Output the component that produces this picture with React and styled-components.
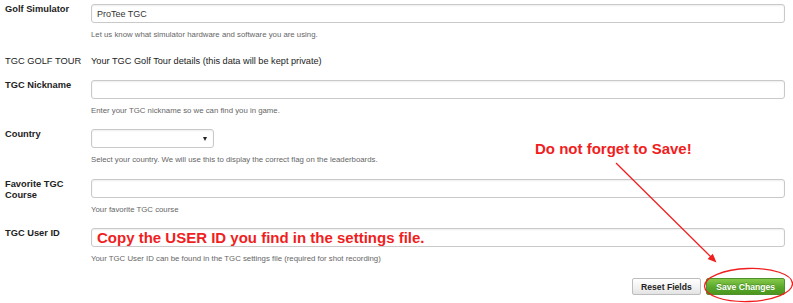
import React from "react";
import styled, { createGlobalStyle } from "styled-components";

const GlobalStyle = createGlobalStyle`
  html, body {
    margin: 0;
    padding: 0;
    background: #fff;
  }
  body {
    font-family: "Liberation Sans", Arial, sans-serif;
  }
`;

const Page = styled.div`
  position: relative;
  width: 793px;
  height: 303px;
  box-sizing: border-box;
  padding: 4px 8px 0 5px;
  overflow: hidden;
`;

const Row = styled.div`
  display: grid;
  grid-template-columns: 86px 1fr;
  margin-bottom: ${(p) => (p.$gap != null ? p.$gap : 12.5)}px;
`;

const Label = styled.div`
  font-size: 9.3px;
  line-height: 11px;
  font-weight: ${(p) => (p.$plain ? 400 : 700)};
  color: #222;
  padding-right: 8px;
  ${(p) => p.$plain && "line-height: 14px;"}
`;

const Plain = styled.div`
  font-size: 9.2px;
  line-height: 14px;
  color: #222;
`;

const Field = styled.div`
  display: flex;
  flex-direction: column;
`;

const TextBox = styled.input`
  box-sizing: border-box;
  width: 100%;
  height: 19px;
  margin: 0;
  padding: 0 5px;
  border: 1px solid #c9c9c9;
  border-radius: 3px;
  box-shadow: inset 0 1px 2px rgba(0, 0, 0, 0.07);
  background: #fff;
  font-family: "Liberation Sans", Arial, sans-serif;
  font-size: ${(p) => (p.$shout ? "15px" : "9px")};
  font-weight: ${(p) => (p.$shout ? 700 : 400)};
  color: ${(p) => (p.$shout ? "#f01e1e" : "#333")};
  outline: none;
`;

const SelectBox = styled.div`
  position: relative;
  box-sizing: border-box;
  width: 123px;
  height: 19px;
  border: 1px solid #c9c9c9;
  border-radius: 3px;
  box-shadow: inset 0 1px 2px rgba(0, 0, 0, 0.07);
  background: #fff;

  &::after {
    content: "";
    position: absolute;
    right: 6px;
    top: 7px;
    border-left: 2.5px solid transparent;
    border-right: 2.5px solid transparent;
    border-top: 4px solid #222;
  }
`;

const Help = styled.div`
  margin-top: 6px;
  font-size: 7.8px;
  line-height: 12px;
  color: #666;
  white-space: nowrap;
`;

const Actions = styled.div`
  display: flex;
  justify-content: flex-end;
  gap: 5px;
  margin-top: 1px;
`;

const Button = styled.button`
  box-sizing: border-box;
  height: 17px;
  padding: 0 ${(p) => (p.$primary ? 9 : 8.5)}px;
  border-radius: 2px;
  font-family: "Liberation Sans", Arial, sans-serif;
  font-size: 8.6px;
  font-weight: 700;
  white-space: nowrap;
  cursor: pointer;
  border: 1px solid ${(p) => (p.$primary ? "#4f922c" : "#bdbdbd")};
  color: ${(p) => (p.$primary ? "#fff" : "#222")};
  background: ${(p) =>
    p.$primary
      ? "linear-gradient(#86c94a, #5aa72c 55%, #4b971f)"
      : "linear-gradient(#ffffff, #f1f1f1 60%, #e2e2e2)"};
  text-shadow: ${(p) => (p.$primary ? "0 -1px 0 rgba(0,0,0,0.2)" : "none")};
`;

const Note = styled.div`
  position: absolute;
  left: 535px;
  top: 140px;
  font-size: 15px;
  line-height: 17px;
  font-weight: 700;
  color: #f01e1e;
  white-space: nowrap;
`;

const Marks = styled.svg`
  position: absolute;
  left: 0;
  top: 0;
  pointer-events: none;
`;

export default function App() {
  return (
    <Page>
      <GlobalStyle />
      <Row>
        <Label>Golf Simulator</Label>
        <Field>
          <TextBox defaultValue="ProTee TGC" />
          <Help>Let us know what simulator hardware and software you are using.</Help>
        </Field>
      </Row>

      <Row $gap={12}>
        <Label $plain>TGC GOLF TOUR</Label>
        <Plain>Your TGC Golf Tour details (this data will be kept private)</Plain>
      </Row>

      <Row>
        <Label>TGC Nickname</Label>
        <Field>
          <TextBox />
          <Help>Enter your TGC nickname so we can find you in game.</Help>
        </Field>
      </Row>

      <Row>
        <Label>Country</Label>
        <Field>
          <SelectBox />
          <Help>
            Select your country. We will use this to display the correct flag on
            the leaderboards.
          </Help>
        </Field>
      </Row>

      <Row>
        <Label>
          Favorite TGC
          <br />
          Course
        </Label>
        <Field>
          <TextBox />
          <Help>Your favorite TGC course</Help>
        </Field>
      </Row>

      <Row $gap={13}>
        <Label>TGC User ID</Label>
        <Field>
          <TextBox $shout defaultValue="Copy the USER ID you find in the settings file." />
          <Help>
            Your TGC User ID can be found in the TGC settings file (required for
            shot recording)
          </Help>
        </Field>
      </Row>

      <Actions>
        <Button>Reset Fields</Button>
        <Button $primary>Save Changes</Button>
      </Actions>

      <Note>Do not forget to Save!</Note>
      <Marks width="793" height="303" viewBox="0 0 793 303">
        <line x1="616" y1="163" x2="711" y2="257" stroke="#f01e1e" strokeWidth="1.3" />
        <polygon points="716.5,262.5 707.6,258.9 712.8,253.7" fill="#f01e1e" />
        <ellipse
          cx="748.5"
          cy="285"
          rx="44"
          ry="16.5"
          fill="none"
          stroke="#f01e1e"
          strokeWidth="1.3"
          transform="rotate(-2 748.5 285)"
        />
      </Marks>
    </Page>
  );
}
